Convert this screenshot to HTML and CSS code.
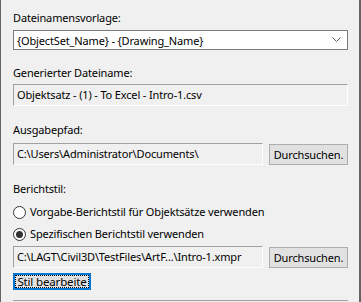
FILE: index.html
```html
<!DOCTYPE html>
<html>
<head>
<meta charset="utf-8">
<link rel="stylesheet" href="styles.css">
</head>
<body>
<div class="panel">
  <div class="label l1">Dateinamensvorlage:</div>
  <div class="combo">
    <span>{ObjectSet_Name} - {Drawing_Name}</span>
    <svg class="chev" width="9" height="6" viewBox="0 0 9 6"><path d="M0.5 0.5 L4.5 4.5 L8.5 0.5" fill="none" stroke="#606060" stroke-width="1"/></svg>
  </div>
  <div class="label l2">Generierter Dateiname:</div>
  <div class="field ro">Objektsatz - (1) - To Excel - Intro-1.csv</div>
  <div class="label l3">Ausgabepfad:</div>
  <div class="row">
    <div class="field ro path">C:\Users\Administrator\Documents\</div>
    <div class="btn">Durchsuchen.</div>
  </div>
  <div class="label l4">Berichtstil:</div>
  <div class="radio r1"><span class="dot"></span>Vorgabe-Berichtstil für Objektsätze verwenden</div>
  <div class="radio r2"><span class="dot on"></span>Spezifischen Berichtstil verwenden</div>
  <div class="row r3">
    <div class="field ro path">C:\LAGT\Civil3D\TestFiles\ArtF...\Intro-1.xmpr</div>
    <div class="btn">Durchsuchen.</div>
  </div>
  <div class="focusbtn"><span>Stil bearbeite</span></div>
  <div class="rule"></div>
</div>
</body>
</html>
```

FILE: styles.css
```css
html, body {
  margin: 0;
  padding: 0;
  background: #f0f0f0;
}
body {
  font-family: "Noto Sans", "Open Sans", sans-serif;
  font-size: 11px;
  letter-spacing: -0.15px;
  color: #000;
}
.panel {
  box-sizing: border-box;
  width: 361px;
  height: 302px;
  border-left: 1px solid #646464;
  border-right: 2px solid #646464;
  padding: 0 11px 0 12px;
  display: flex;
  flex-direction: column;
  overflow: hidden;
}
.panel > * { flex-shrink: 0; }
.label {
  height: 16px;
  line-height: 16px;
  white-space: nowrap;
}
.l1 { margin-top: 10px; margin-bottom: 4px; }
.l2 { margin-top: 15px; margin-bottom: 3px; }
.l3 { margin-top: 16px; margin-bottom: 5px; }
.l4 { margin-top: 16px; margin-bottom: 2px; }
.combo {
  box-sizing: border-box;
  height: 20px;
  background: #fff;
  border: 1px solid #7a7a7a;
  display: flex;
  align-items: center;
  justify-content: space-between;
  padding: 0 6px 0 3px;
  white-space: nowrap;
}
.chev { display: block; }
.field {
  box-sizing: border-box;
  height: 22px;
  border-top: 1px solid #a0a0a0;
  border-left: 1px solid #a0a0a0;
  border-right: 1px solid #fff;
  border-bottom: 1px solid #fff;
  line-height: 20px;
  padding-left: 3px;
  white-space: nowrap;
  overflow: hidden;
}
.row {
  display: flex;
  gap: 6px;
  align-items: flex-start;
}
.path { width: 250px; flex-shrink: 0; }
.btn {
  box-sizing: border-box;
  width: 79px;
  height: 21px;
  margin-top: 1px;
  background: #e1e1e1;
  border: 1px solid #adadad;
  line-height: 19px;
  text-align: center;
  white-space: nowrap;
  flex-shrink: 0;
}
.radio {
  height: 16px;
  line-height: 16px;
  display: flex;
  align-items: center;
  white-space: nowrap;
}
.r1 { margin-top: 5px; }
.r2 { margin-top: 6px; }
.dot {
  box-sizing: border-box;
  width: 13px;
  height: 13px;
  border-radius: 50%;
  border: 1px solid #333;
  background: #fff;
  margin-right: 4px;
  position: relative;
  flex-shrink: 0;
}
.dot.on::after {
  content: "";
  position: absolute;
  left: 2px;
  top: 2px;
  width: 7px;
  height: 7px;
  border-radius: 50%;
  background: #333;
}
.r3 { margin-top: 4px; }
.focusbtn {
  box-sizing: border-box;
  margin-top: 5px;
  width: 78px;
  height: 17px;
  border: 2px solid #0078d7;
  background: #e1e1e1;
}
.focusbtn span {
  display: block;
  box-sizing: border-box;
  height: 13px;
  border: 1px dotted #000;
  font-size: 11.5px;
  line-height: 11px;
  text-align: center;
  white-space: nowrap;
}
.rule {
  margin-top: 10px;
  height: 1px;
  background: #a0a0a0;
}
```
